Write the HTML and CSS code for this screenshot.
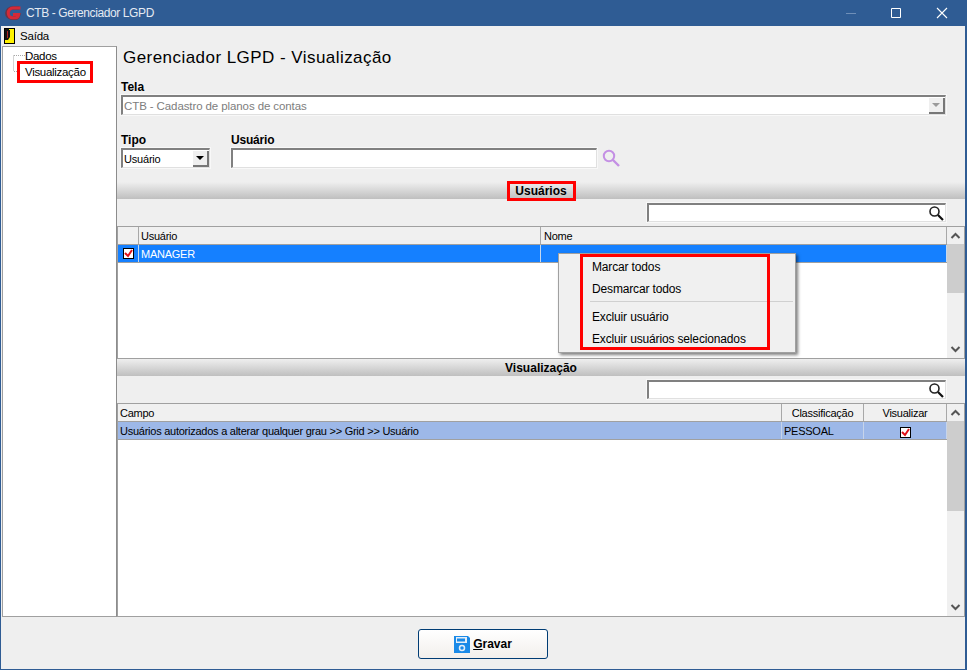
FILE: index.html
```html
<!DOCTYPE html>
<html lang="pt">
<head>
<meta charset="utf-8">
<title>CTB - Gerenciador LGPD</title>
<link rel="stylesheet" href="styles.css">
</head>
<body>
<div class="window">
  <header class="titlebar">
    <svg class="logo" viewBox="0 0 16 16" width="16" height="16"><path d="M14.500 3H7.500C4.300 3 1.800 5.300 1.800 8s2 5.200 5.200 5.200h3.500c1.500 0 2.700-1 3.200-3.400H8" fill="none" stroke="#6b3346" stroke-width="3.400"/><path d="M15.500 3H8C5.300 3 3.300 5.300 3.300 8S5 12.800 7.500 12.800h3c1.500 0 2.800-1 3.200-3.300H8" fill="none" stroke="#d42a38" stroke-width="3"/></svg>
    <span class="title">CTB - Gerenciador LGPD</span>
    <span class="winbtns">
      <svg width="46" height="26" viewBox="0 0 46 26"><path d="M19 13.500h10" stroke="#6f8fb8"/></svg>
      <svg width="46" height="26" viewBox="0 0 46 26"><path d="M18.500 8.500h9v9h-9z" fill="none" stroke="#fff"/></svg>
      <svg width="46" height="26" viewBox="0 0 46 26"><path d="M18 8l10 10M28 8 18 18" stroke="#fff" stroke-width="1.100"/></svg>
    </span>
  </header>
  <nav class="menubar">
    <svg class="exit" width="11" height="16" viewBox="0 0 11 16"><rect width="11" height="16" fill="#000"/><rect x="1" y="1" width="9" height="14" fill="#fff200"/><path d="M1 1h4v1h1v7l-2 3H1z" fill="#111"/><path d="M3 3h1v7H3z" fill="#b02020"/></svg>
    <span>Saída</span>
  </nav>
  <div class="content">
    <aside class="tree">
      <svg class="tree-lines" width="12" height="20" viewBox="0 0 12 20"><path d="M0.500 3.500V19.500M1 3.500h11M1 19.500h4" stroke="#a8a8a8" stroke-dasharray="1 1" fill="none"/></svg>
      <div class="tree-item">Dados</div>
      <div class="tree-item tree-mark">Visualização</div>
    </aside>
    <main class="main">
      <h1 class="heading">Gerenciador LGPD - Visualização</h1>
      <div class="field">
        <label class="lbl">Tela</label>
        <div class="input combo-tela">
          <span class="disabled-text">CTB - Cadastro de planos de contas</span>
          <span class="dd dd-off"><i></i></span>
        </div>
      </div>
      <div class="row-fields">
        <div class="field">
          <label class="lbl">Tipo</label>
          <div class="input combo-tipo"><span>Usuário</span><span class="dd"><i></i></span></div>
        </div>
        <div class="field">
          <label class="lbl">Usuário</label>
          <div class="user-line">
            <div class="input input-user"></div>
            <svg class="lens-purple" width="18" height="18" viewBox="0 0 18 18"><circle cx="7" cy="7" r="5.200" fill="none" stroke="#c490e4" stroke-width="2"/><path d="M11 11l6 6" stroke="#c490e4" stroke-width="2.400"/></svg>
          </div>
        </div>
      </div>
      <div class="section first"><span class="sec-mark">Usuários</span></div>
      <div class="search-row">
        <div class="input search">
          <svg width="16" height="16" viewBox="0 0 16 16"><circle cx="6.500" cy="6.500" r="4.500" fill="none" stroke="#222" stroke-width="1.600"/><path d="M10 10l5 5" stroke="#111" stroke-width="2.200"/></svg>
        </div>
      </div>
      <div class="grid grid-users">
        <div class="grid-body">
          <div class="gh">
            <div class="c c-check"></div>
            <div class="c c-user">Usuário</div>
            <div class="c c-fill">Nome</div>
          </div>
          <div class="gr sel">
            <div class="c c-check"><span class="check"><svg width="9" height="9" viewBox="0 0 9 9"><path d="M1 4l3 3 4-6" fill="none" stroke="#e01018" stroke-width="2"/></svg></span></div>
            <div class="c c-user">MANAGER</div>
            <div class="c c-fill"></div>
          </div>
        </div>
        <div class="sb">
          <svg class="arr" width="17" height="17" viewBox="0 0 17 17"><path d="M4.500 11l4-4 4 4" fill="none" stroke="#555" stroke-width="2"/></svg>
          <div class="track"><div class="thumb thumb-users"></div></div>
          <svg class="arr" width="17" height="18" viewBox="0 0 17 18"><path d="M4.500 7l4 4 4-4" fill="none" stroke="#555" stroke-width="2"/></svg>
        </div>
        <div class="ctx">
          <div class="ctx-mark">
            <div class="mi">Marcar todos</div>
            <div class="mi">Desmarcar todos</div>
            <div class="msep"></div>
            <div class="mi">Excluir usuário</div>
            <div class="mi">Excluir usuários selecionados</div>
          </div>
        </div>
      </div>
      <div class="section"><span>Visualização</span></div>
      <div class="search-row">
        <div class="input search">
          <svg width="16" height="16" viewBox="0 0 16 16"><circle cx="6.500" cy="6.500" r="4.500" fill="none" stroke="#222" stroke-width="1.600"/><path d="M10 10l5 5" stroke="#111" stroke-width="2.200"/></svg>
        </div>
      </div>
      <div class="grid grid-view">
        <div class="grid-body">
          <div class="gh">
            <div class="c c-fill">Campo</div>
            <div class="c c-class center">Classificação</div>
            <div class="c c-vis center">Visualizar</div>
          </div>
          <div class="gr sel2">
            <div class="c c-fill">Usuários autorizados a alterar qualquer grau &gt;&gt; Grid &gt;&gt; Usuário</div>
            <div class="c c-class">PESSOAL</div>
            <div class="c c-vis center"><span class="check"><svg width="9" height="9" viewBox="0 0 9 9"><path d="M1 4l3 3 4-6" fill="none" stroke="#e01018" stroke-width="2"/></svg></span></div>
          </div>
        </div>
        <div class="sb">
          <svg class="arr" width="17" height="17" viewBox="0 0 17 17"><path d="M4.500 11l4-4 4 4" fill="none" stroke="#555" stroke-width="2"/></svg>
          <div class="track"><div class="thumb thumb-view"></div></div>
          <svg class="arr" width="17" height="18" viewBox="0 0 17 18"><path d="M4.500 7l4 4 4-4" fill="none" stroke="#555" stroke-width="2"/></svg>
        </div>
      </div>
    </main>
  </div>
  <footer class="footer">
    <button class="btn" type="button">
      <svg width="16" height="17" viewBox="0 0 16 17"><path d="M0 0h14l2 2v15H0z" fill="#1a8ae8"/><rect x="2" y="1" width="11" height="6" fill="#e4eef8"/><rect x="3" y="2.500" width="8" height="3" fill="#1a8ae8"/><circle cx="8" cy="12" r="2.500" fill="none" stroke="#e4eef8" stroke-width="1.500"/></svg>
      <span><u>G</u>ravar</span>
    </button>
  </footer>
</div>
</body>
</html>
```
FILE: styles.css
```css
* { box-sizing: border-box; }
html, body { margin: 0; padding: 0; }
body { font-family: "Liberation Sans", Arial, sans-serif; font-size: 11px; letter-spacing: -0.2px; color: #000; background: #efefef; }
.window { width: 967px; height: 670px; display: flex; flex-direction: column; background: #efefef; border-left: 1px solid #2f5c94; border-right: 2px solid #2f5c94; border-bottom: 1px solid #2f5c94; position: relative; }
.titlebar { height: 26px; flex: none; background: #2f5c94; color: #e4eaf2; display: flex; align-items: center; margin: 0 -2px 0 -1px; padding-left: 5px; }
.logo { flex: none; }
.title { margin-left: 5px; font-size: 12px; letter-spacing: -0.4px; }
.winbtns { margin-left: auto; margin-right: 2px; display: flex; }
.winbtns svg { display: block; }
.menubar { height: 20px; flex: none; display: flex; align-items: center; padding-left: 3px; gap: 5px; font-size: 11.500px; letter-spacing: -0.2px; }
.content { flex: none; height: 571px; display: flex; }
.tree { width: 115px; margin-left: 1px; flex: none; background: #fff; border: 1px solid #a0a0a0; border-right-color: #8c8c8c; padding: 1px 0 0 21px; position: relative; font-size: 11.500px; letter-spacing: -0.3px; }
.tree-lines { position: absolute; left: 10px; top: 5px; }
.tree-item { height: 16px; line-height: 16px; padding-left: 1px; position: relative; }
.tree-mark { margin: -3px 0 0 -7px; padding: 0 0 0 5px; width: 76px; height: 22px; line-height: 16px; border: 3px solid #f00; }
.main { flex: 1; min-width: 0; position: relative; }
.heading { font-size: 17px; font-weight: normal; margin: 0; padding: 1px 0 0 6px; height: 30px; line-height: 21px; letter-spacing: 0.45px; }
.field { display: flex; flex-direction: column; }
.lbl { font-weight: bold; font-size: 12px; letter-spacing: 0; height: 19px; line-height: 17px; padding: 3px 0 0 4px; }
.row-fields .field + .field .lbl { letter-spacing: -0.2px; }
.input { background: #fff; border: 1px solid #e0e0e0; border-top: 2px solid #808080; border-left: 2px solid #808080; height: 20px; display: flex; align-items: center; box-shadow: 0 0 0 1px #f8f8f8; }
.combo-tela { margin-left: 4px; width: 825px; padding-left: 1px; justify-content: space-between; }
.disabled-text { color: #7d7d7d; font-size: 11.500px; letter-spacing: -0.1px; }
.dd { width: 16px; height: 16px; background: #efefef; border-right: 2px solid #777; border-bottom: 2px solid #777; display: flex; align-items: center; justify-content: center; flex: none; }
.dd i { width: 0; height: 0; border: 4px solid transparent; border-top: 4px solid #000; border-bottom: 0; }
.dd-off i { border-top-color: #9a9a9a; }
.row-fields { display: flex; margin-top: 14px; gap: 17px; height: 51px; }
.row-fields .input { margin-left: 4px; }
.combo-tipo { width: 89px; justify-content: space-between; padding-left: 1px; }
.user-line { display: flex; align-items: flex-start; gap: 5px; }
.input-user { width: 366px; }
.lens-purple { margin-top: 1px; }
.section { height: 17px; background: linear-gradient(#efefef, #bfbfbf); display: flex; align-items: center; justify-content: center; font-weight: bold; font-size: 12px; letter-spacing: 0; }
.section.first { margin-top: 2px; }
.sec-mark { border: 3px solid #f00; height: 20px; width: 69px; display: flex; align-items: center; justify-content: center; flex: none; }
.search-row { height: 27px; padding: 4px 19px 0 0; display: flex; justify-content: flex-end; }
.search { width: 299px; height: 19px; justify-content: flex-end; padding-right: 1px; }
.grid { border: 1px solid #a0a0a0; background: #fff; display: flex; position: relative; }
.grid-users { height: 133px; }
.grid-view { height: 214px; }
.grid-body { flex: 1; min-width: 0; }
.gh, .gr { display: flex; height: 18px; border-bottom: 1px solid #a0a0a0; }
.gh { background: #f0f0f0; }
.c { border-right: 1px solid #a8a8a8; padding: 0 2px; line-height: 19px; white-space: nowrap; overflow: hidden; letter-spacing: -0.25px; }
.c-check { width: 21px; flex: none; display: flex; align-items: center; justify-content: center; padding: 0; }
.c-user { width: 402px; flex: none; }
.c-fill { flex: 1; min-width: 0; }
.c-user + .c-fill { padding-left: 3px; }
.c-class { width: 82px; flex: none; }
.c-vis { width: 83px; flex: none; }
.center { text-align: center; }
.sel { background: #1580ff; color: #fff; }
.sel .c { border-right-color: #c5d8ee; }
.sel2 { background: #9db8e8; }
.sel2 .c { border-right-color: #c7d4ea; }
.check { display: inline-flex; width: 11px; height: 11px; background: #fff; border: 1px solid #000; align-items: center; justify-content: center; vertical-align: middle; }
.check svg { display: block; flex: none; }
.sb { width: 17px; flex: none; background: #f0f0f0; display: flex; flex-direction: column; }
.arr { display: block; flex: none; }
.track { flex: 1; }
.thumb { background: #cdcdcd; }
.thumb-users { height: 49px; }
.thumb-view { height: 90px; }
.ctx { position: absolute; left: 440px; top: 26px; width: 238px; height: 100px; background: #f0f0f0; border: 1px solid #a0a0a0; box-shadow: 2px 2px 3px rgba(0,0,0,.5); padding: 0 0 0 21px; z-index: 2; font-size: 12px; letter-spacing: -0.15px; }
.ctx-mark { width: 190px; height: 96px; padding: 3px 0 0 12px; position: relative; }
.ctx-mark::after { content: ""; position: absolute; inset: 0; border: 3px solid #f00; }
.mi { height: 22px; line-height: 20px; }
.msep { height: 1px; background: #d0d0d0; margin: 0 -23px 5px -2px; }
.footer { flex: 1; display: flex; justify-content: center; align-items: flex-start; padding-top: 12px; }
.btn { width: 130px; height: 30px; border: 1px solid #003c74; border-radius: 3px; background: linear-gradient(#fff, #f2efec); font: bold 12px "Liberation Sans", Arial, sans-serif; display: flex; align-items: center; justify-content: center; gap: 3px; padding: 0; color: #000; }
```
